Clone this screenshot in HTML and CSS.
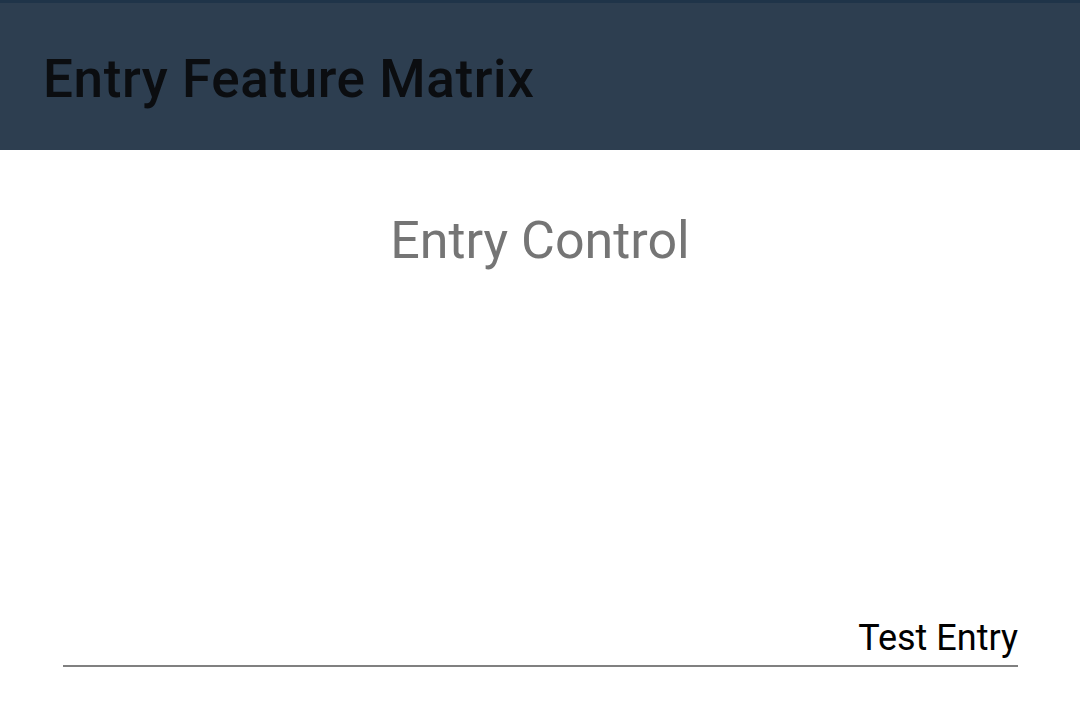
FILE: index.html
```html
<!DOCTYPE html>
<html>
<head>
<meta charset="utf-8">
<link rel="stylesheet" href="styles.css">
</head>
<body>
<div class="app">
  <header class="toolbar">
    <h1 class="toolbar-title">Entry Feature Matrix</h1>
  </header>
  <main class="content">
    <div class="section-title">Entry Control</div>
    <div class="spacer"></div>
    <div class="entry-wrap">
      <div class="entry">Test Entry</div>
    </div>
  </main>
</div>
</body>
</html>
```
FILE: styles.css
```css
html, body {
  margin: 0;
  padding: 0;
  background: #ffffff;
}
body {
  font-family: Roboto, "Noto Sans", sans-serif;
  width: 1080px;
  height: 710px;
  overflow: hidden;
}
.app {
  display: flex;
  flex-direction: column;
  height: 710px;
}
.toolbar {
  height: 147px;
  background: #2d3e50;
  border-top: 3px solid #1f3449;
  display: flex;
  align-items: center;
  padding-left: 43px;
}
.toolbar-title {
  margin: 4px 0 0 0;
  font-size: 53px;
  line-height: 62px;
  font-weight: 500;
  color: #0b0d10;
  letter-spacing: 0.6px;
}
.content {
  flex: 1;
  display: flex;
  flex-direction: column;
}
.section-title {
  margin-top: 62px;
  text-align: center;
  font-size: 52px;
  color: #757575;
  line-height: 58px;
}
.spacer {
  flex: 1;
}
.entry-wrap {
  padding: 0 62px 43px 63px;
}
.entry {
  text-align: right;
  font-size: 36px;
  color: #000000;
  line-height: 44px;
  padding-bottom: 5px;
  border-bottom: 2px solid #808080;
}
```
